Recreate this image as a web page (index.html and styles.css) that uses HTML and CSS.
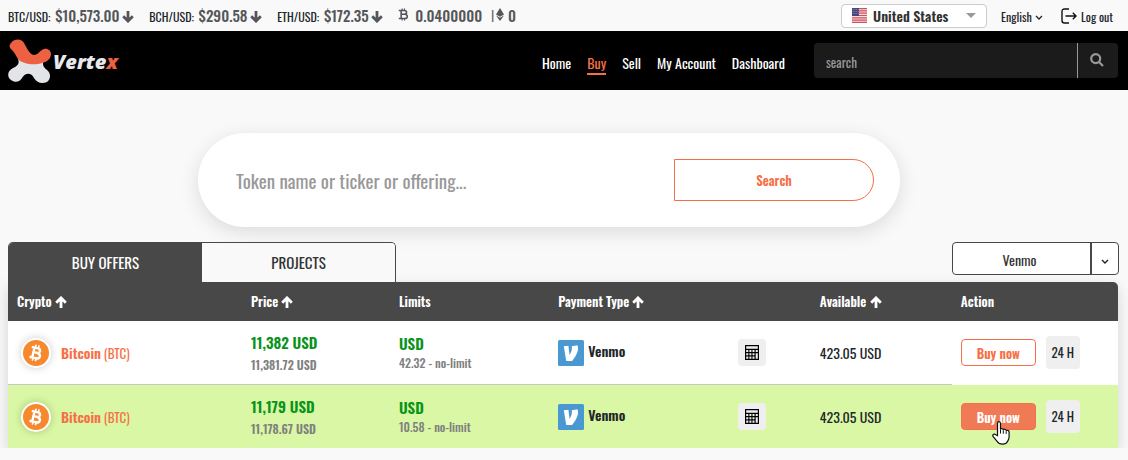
FILE: index.html
```html
<!DOCTYPE html>
<html lang="en">
<head>
  <meta charset="UTF-8" />
  <meta name="viewport" content="width=device-width, initial-scale=1.0" />
  <title>Vertex - Buy</title>
  <link rel="stylesheet" href="styles.css">
</head>
<body>

  <!-- shared icons -->
  <svg class="sprite" aria-hidden="true">
    <symbol id="arrow" viewBox="0 0 12 12">
      <path fill="none" stroke="currentColor" stroke-width="2.800" d="M6 0v10M1.200 5.300L6 10.100l4.800-4.800" />
    </symbol>
    <symbol id="btc" viewBox="0 0 14 16">
      <path fill="none" stroke="currentColor" stroke-width="2" d="M1 2.800h7.200c3.600 0 3.600 4.900 0 4.900H4.500M8.500 7.700c4.400 0 4.400 5.500 0 5.500H1M4 2.800v10.400" />
      <path stroke="currentColor" stroke-width="1.500" d="M5.300.3v2.500M8.300.3v2.500M5.300 13.200v2.500M8.300 13.200v2.500" />
    </symbol>
    <symbol id="coin" viewBox="0 0 30 30">
      <circle cx="15" cy="15" r="15" fill="#fff" />
      <circle cx="15" cy="15" r="13" fill="#f6882e" />
      <g transform="rotate(13 15 15)" fill="none" stroke="#fff">
        <path stroke-width="2.400" d="M9.500 10h6.300c3.600 0 3.600 4.700 0 4.700H12.500M16.200 14.900c4.400 0 4.400 5.200 0 5.200H9.500M12.300 10v10.100" />
        <path stroke-width="1.600" d="M13.200 6.800V10M16.300 6.800V10M13.200 20v3.200M16.300 20v3.200" />
      </g>
    </symbol>
    <symbol id="venmo" viewBox="0 0 26 26">
      <rect width="26" height="26" rx="1.500" fill="#4a98d2" />
      <path fill="#fff" d="M5.800 6.300l4.600-.6 1.200 9.200c1.600-2.800 3-6.200 2.100-8.700l5.700-1c2.300 5-1.800 11.400-5.300 15.800H8.200z" />
    </symbol>
    <symbol id="calc" viewBox="0 0 14 15">
      <path fill="#000" fill-rule="evenodd" d="M0 0h14v15H0zM1.200 1.300v2.400h11.600V1.300zM1.200 5v2h2.100V5zM4.400 5v2h2V5zM7.500 5v2h2V5zM10.700 5v2h2.100V5zM1.200 8.200v2h2.100v-2zM4.400 8.200v2h2v-2zM7.500 8.200v2h2v-2zM10.700 8.200v5.600h2.100V8.200zM1.200 11.600v2.200h2.100v-2.200zM4.400 11.600v2.200h2v-2.200zM7.500 11.600v2.200h2v-2.200z" />
    </symbol>
  </svg>

  <div class="topbar">
    <ul class="rates">
      <li>BTC/USD: <b>$10,573.00</b> <svg class="arrow"><use href="#arrow" /></svg></li>
      <li>BCH/USD: <b>$290.58</b> <svg class="arrow"><use href="#arrow" /></svg></li>
      <li>ETH/USD: <b>$172.35</b> <svg class="arrow"><use href="#arrow" /></svg></li>
      <li class="wallet">
        <svg class="btc"><use href="#btc" /></svg>
        <b>0.0400000</b>
      </li>
      <li class="wallet eth">
        <span>|</span>
        <svg class="ether" viewBox="0 0 8 13"><path d="M4 0l4 6.500-4 2.300-4-2.300zM4 9.800l4-2.300L4 13 0 7.500z" /></svg>
        <b>0</b>
      </li>
    </ul>
    <div class="settings">
      <div class="country">
        <svg class="flag" viewBox="0 0 15 15" aria-hidden="true">
          <rect width="15" height="15" fill="#f4dfe1" />
          <path stroke="#d0505c" stroke-width="1.200" d="M0 .6h15M0 2.900h15M0 5.200h15M0 7.500h15M0 9.800h15M0 12.100h15M0 14.400h15" />
          <rect width="7" height="8" fill="#46467f" />
          <path stroke="#a9a9cc" stroke-width=".8" stroke-dasharray=".8 1" d="M.8 1.500h6M.8 3.500h6M.8 5.500h6" />
        </svg>
        <select aria-label="Country">
          <option>United States</option>
        </select>
      </div>
      <select class="language" aria-label="Language">
        <option>English</option>
      </select>
      <a class="logout" href="#">
        <svg viewBox="0 0 16 16" aria-hidden="true"><path d="M8 1H3.500Q1 1 1 3.500v9Q1 15 3.500 15H8M4.500 8H15M11.800 4.800L15 8l-3.200 3.200" /></svg>
        Log out
      </a>
    </div>
  </div>

  <header class="site-header">
    <a class="logo" href="#">
      <svg viewBox="0 0 43 44" aria-hidden="true">
        <path fill="#e2e4e8" d="M10 20c2 5-1 7-5 9-6 3-6 9-2 12 4 3 9 2 11-2 3-5 9-6 12 0 3 5 8 6 13 4 4-3 4-9 0-12-4-3-5-6-3-10z" />
        <path fill="#ee6042" d="M3 4c4-5 11-4 13 0 3 5 5 11 10 12 4 0 5-4 10-6 4-1 7 2 7 5 0 6-6 9-13 10-8 1-17-1-20-5C8 17 7 14 4 11 1 9 1 6 3 4z" />
      </svg>
      <span class="brand">Verte<i>x</i></span>
    </a>
    <nav class="nav-links">
      <a href="#">Home</a>
      <a class="active" href="#">Buy</a>
      <a href="#">Sell</a>
      <a href="#">My Account</a>
      <a href="#">Dashboard</a>
    </nav>
    <form class="site-search">
      <input type="text" placeholder="search" aria-label="Search site" />
      <button type="button" aria-label="Search">
        <svg viewBox="0 0 14 14"><path d="M5.700 1.100a4.500 4.500 0 1 0 0 9 4.500 4.500 0 0 0 0-9zM9 9l4 4" /></svg>
      </button>
    </form>
  </header>

  <main>
    <form class="token-search">
      <input type="text" placeholder="Token name or ticker or offering..." aria-label="Token search" />
      <button type="button">Search</button>
    </form>

    <div class="toolbar">
      <div class="tabs">
        <button class="active" type="button">BUY OFFERS</button>
        <button type="button">PROJECTS</button>
      </div>
      <select class="payment" aria-label="Payment type">
        <option>Venmo</option>
      </select>
    </div>

    <table class="offers">
      <colgroup>
        <col class="col-crypto"><col class="col-price"><col class="col-limits"><col class="col-payment"><col class="col-calc"><col class="col-available"><col>
      </colgroup>
      <thead>
        <tr>
          <th>Crypto <svg class="arrow up"><use href="#arrow" /></svg></th>
          <th>Price <svg class="arrow up"><use href="#arrow" /></svg></th>
          <th>Limits</th>
          <th colspan="2">Payment Type <svg class="arrow up"><use href="#arrow" /></svg></th>
          <th>Available <svg class="arrow up"><use href="#arrow" /></svg></th>
          <th>Action</th>
        </tr>
      </thead>
      <tbody>
        <tr>
          <td><a class="crypto" href="#"><svg><use href="#coin" /></svg><span><b>Bitcoin</b> (BTC)</span></a></td>
          <td><div class="main-value">11,382 USD</div><div class="sub-value">11,381.72 USD</div></td>
          <td class="limits"><div class="main-value">USD</div><div class="sub-value">42.32 - no-limit</div></td>
          <td><div class="pay"><svg><use href="#venmo" /></svg><b>Venmo</b></div></td>
          <td><button class="calc" type="button" aria-label="Calculator"><svg><use href="#calc" /></svg></button></td>
          <td class="available">423.05 USD</td>
          <td>
            <div class="actions"><button class="buy" type="button">Buy now</button><span class="hours">24 H</span></div>
          </td>
        </tr>
        <tr class="selected">
          <td><a class="crypto" href="#"><svg><use href="#coin" /></svg><span><b>Bitcoin</b> (BTC)</span></a></td>
          <td><div class="main-value">11,179 USD</div><div class="sub-value">11,178.67 USD</div></td>
          <td class="limits"><div class="main-value">USD</div><div class="sub-value">10.58 - no-limit</div></td>
          <td><div class="pay"><svg><use href="#venmo" /></svg><b>Venmo</b></div></td>
          <td><button class="calc" type="button" aria-label="Calculator"><svg><use href="#calc" /></svg></button></td>
          <td class="available">423.05 USD</td>
          <td>
            <div class="actions">
              <button class="buy" type="button">Buy now</button><span class="hours">24 H</span>
              <svg class="pointer" viewBox="0 0 18 24" aria-hidden="true">
                <path fill="#fff" stroke="#111" stroke-width="1.200" d="M5.500 14.500V2.600c0-2.600 3-2.600 3 0v6c.3-1.600 2.800-1.400 2.800.5.500-1.400 2.900-1.100 2.900.8.500-1.100 2.900-.8 2.900 1.200V16c0 2-.9 3.100-1.600 4.600-.8 1.800-2.300 2.600-5 2.600-2.800 0-4.300-1-5.400-2.900L1 15.400c-.9-1.900 1.400-3 2.700-1.700z" />
                <path fill="none" stroke="#111" d="M8.500 8.500v4M11.300 9.300v3.400M14.200 10.300v2.600" />
              </svg>
            </div>
          </td>
        </tr>
      </tbody>
    </table>
  </main>

</body>
</html>
```
FILE: styles.css
```css
:root {
  --accent: #f76f47;
  --dark: #484848;
  --text: #212529;
  --page: #f9f9f9;
  --green: #08931b;
}

* { box-sizing: border-box; margin: 0; padding: 0; }

body {
  font-family: Oswald, "Roboto Condensed", "Liberation Sans Narrow", sans-serif;
  font-size: 14px;
  background: var(--page);
  color: var(--text);
}

a { text-decoration: none; }
input, select, button { font-family: inherit; }
select { appearance: none; cursor: pointer; }
.sprite { display: none; }

.arrow {
  width: 12px;
  height: 12px;
  vertical-align: -1px;
}
.arrow.up { transform: rotate(180deg); }

/* top bar */
.topbar {
  display: flex;
  justify-content: space-between;
  align-items: center;
  height: 31px;
  padding: 0 15px 0 8px;
}

.rates {
  display: flex;
  align-items: center;
  gap: 15px;
  list-style: none;
  font-size: 12px;
  line-height: 24px;
  white-space: nowrap;
}
.rates b, .rates svg { color: #55565a; }
.rates b { margin: 0 0 0 2px; font-size: 15px; font-weight: 500; }
.wallet { display: flex; align-items: center; gap: 4px; padding-bottom: 2px; color: #55565a; }
.eth { margin-left: -6px; gap: 2px; }
.btc { width: 11px; height: 13px; }
.ether { width: 8px; height: 13px; fill: currentColor; }

.settings { display: flex; align-items: center; gap: 14px; }

.country {
  display: flex;
  align-items: center;
  gap: 6px;
  width: 146px;
  height: 24px;
  padding-left: 10px;
  border: 1px solid #ccc;
  border-radius: 4px;
  background: #fff;
}
.flag { width: 15px; height: 15px; }
.country select {
  flex: 1;
  border: none;
  font-size: 14px;
  font-weight: 600;
  line-height: 20px;
  color: #333;
  background: url("data:image/svg+xml,%3Csvg xmlns='http://www.w3.org/2000/svg' width='10' height='5'%3E%3Cpath d='M0 0h10L5 5z' fill='%23999'/%3E%3C/svg%3E") no-repeat right 10px center;
}

.language {
  width: 42px;
  padding-top: 1px;
  border: none;
  font-size: 12px;
  color: var(--text);
  background: url("data:image/svg+xml,%3Csvg xmlns='http://www.w3.org/2000/svg' width='8' height='6'%3E%3Cpath d='M1 1l3 3 3-3' fill='none' stroke='%23222' stroke-width='1.300'/%3E%3C/svg%3E") no-repeat right 8px;
}

.logout {
  display: flex;
  align-items: center;
  gap: 4px;
  padding: 1px 0 0 4px;
  font-size: 12px;
  color: var(--text);
}
.logout svg { width: 16px; height: 16px; fill: none; stroke: #111; stroke-width: 1.4; }

/* header */
.site-header {
  display: flex;
  align-items: center;
  height: 59px;
  padding: 0 10px 0 8px;
  background: #000;
}

.logo { display: flex; align-items: center; gap: 2px; margin-right: auto; }
.logo svg { width: 43px; height: 44px; }
.brand {
  padding-top: 2px;
  font-family: "Open Sans", sans-serif;
  font-size: 20px;
  font-weight: 800;
  font-style: italic;
  line-height: 24px;
  color: #e8e9ec;
}
.brand i { color: #ee6042; }

.nav-links { display: flex; gap: 16px; margin-right: 29px; }
.nav-links a {
  padding-top: 6px;
  border-bottom: 2px solid transparent;
  font-size: 14px;
  line-height: 20px;
  color: #fff;
}
.nav-links a.active { color: var(--accent); border-color: var(--accent); }

.site-search {
  display: flex;
  width: 304px;
  height: 35px;
  border-radius: 4px;
  background: #1b1b1b;
}
.site-search input {
  flex: 1;
  min-width: 0;
  padding: 2px 12px 0;
  border: none;
  background: none;
  font-size: 13px;
  color: #fff;
}
.site-search input::placeholder { color: #999; }
.site-search button {
  width: 41px;
  padding-right: 3px;
  border: none;
  border-left: 1px solid #999;
  background: none;
}
.site-search svg { width: 14px; height: 14px; fill: none; stroke: #999; stroke-width: 2.2; }

/* token search */
main { padding: 0 10px 0 8px; }

.token-search {
  display: flex;
  align-items: center;
  height: 94px;
  margin: 43px 218px 0 190px;
  padding: 0 26px 0 38px;
  border-radius: 47px;
  background: #fff;
  box-shadow: 0 5px 20px rgba(0, 0, 0, 0.12);
}
.token-search input {
  flex: 1;
  min-width: 0;
  border: none;
  outline: none;
  font-size: 19px;
}
.token-search input::placeholder { color: #999; }
.token-search button {
  width: 200px;
  height: 42px;
  border: 1px solid var(--accent);
  border-radius: 0 21px 21px 0;
  background: #fff;
  font-size: 13px;
  font-weight: 600;
  color: var(--accent);
}

/* tabs */
.toolbar {
  display: flex;
  justify-content: space-between;
  align-items: flex-start;
  margin: 15px -1px 0 0;
}

.tabs {
  display: flex;
  width: 388px;
  height: 40px;
  border: 1px solid var(--dark);
  border-bottom: none;
  border-radius: 5px 5px 0 0;
  overflow: hidden;
}
.tabs button {
  flex: 1;
  padding-bottom: 1px;
  border: none;
  background: var(--page);
  font-size: 15px;
  color: #333;
}
.tabs button.active { background: var(--dark); color: #fff; }

.payment {
  width: 167px;
  height: 33px;
  padding: 2px 32px 0 0;
  border: 1px solid var(--dark);
  border-radius: 4px;
  font-size: 14px;
  text-align: center;
  text-align-last: center;
  color: #333;
  background:
    url("data:image/svg+xml,%3Csvg xmlns='http://www.w3.org/2000/svg' width='8' height='6'%3E%3Cpath d='M1 1l3 3 3-3' fill='none' stroke='%23222' stroke-width='1.400'/%3E%3C/svg%3E") no-repeat right 9px top 16px,
    linear-gradient(var(--dark), var(--dark)) no-repeat right 26px top / 2px 100%,
    #fff;
}

/* offers table */
.offers {
  width: 100%;
  table-layout: fixed;
  border-collapse: separate;
  border-spacing: 0;
  background: #fff;
  border-radius: 0 5px 0 0;
  box-shadow: 0 5px 15px rgba(0, 0, 0, 0.15);
}
.col-crypto { width: 21.08%; }
.col-price { width: 13.33%; }
.col-limits { width: 14.35%; }
.col-payment { width: 16.22%; }
.col-calc { width: 7.35%; }
.col-available { width: 12.7%; }

.offers th {
  height: 39px;
  padding: 0 9px 1px;
  background: var(--dark);
  color: #fff;
  font-size: 13px;
  font-weight: 600;
  text-align: left;
}
.offers th:last-child { border-top-right-radius: 5px; }

.offers td {
  height: 64px;
  padding: 0 9px;
  border-bottom: 1px solid #c8c8c8;
  white-space: nowrap;
}
.offers td:last-child { border-bottom-color: transparent; }
.offers .selected td { height: 63px; border-bottom: none; background: #d9f7a4; }

.crypto {
  display: flex;
  align-items: center;
  gap: 10px;
  padding-left: 4px;
  font-size: 13px;
  color: var(--accent);
}
.crypto b { font-size: 14px; font-weight: 600; }
.crypto svg {
  width: 30px;
  height: 30px;
  border-radius: 50%;
  box-shadow: 0 0 8px rgba(0, 0, 0, 0.2);
}

.main-value { font-size: 15px; font-weight: 600; line-height: 24px; color: var(--green); }
.sub-value { font-size: 12px; font-weight: 600; line-height: 22px; color: #808080; }
.limits .main-value, .limits .sub-value { line-height: 20px; }
.limits .sub-value { font-weight: 500; }

.pay { display: flex; gap: 4px; font-size: 14px; line-height: 22px; }
.pay b { font-weight: 600; }
.pay svg { width: 26px; height: 26px; }

.calc {
  display: flex;
  justify-content: center;
  align-items: center;
  width: 28px;
  height: 27px;
  border: none;
  border-radius: 4px;
  background: #efefef;
}
.calc svg { width: 14px; height: 15px; }

.available { font-size: 14px; }

.actions { display: flex; align-items: center; gap: 10px; position: relative; }
.buy {
  width: 75px;
  height: 27px;
  border: 1px solid var(--accent);
  border-radius: 4px;
  background: #fff;
  font-size: 13px;
  font-weight: 600;
  color: var(--accent);
}
.selected .buy { background: #f07a55; color: #fff; }
.hours {
  width: 34px;
  border-radius: 4px;
  background: #efefef;
  font-size: 13px;
  line-height: 33px;
  text-align: center;
}
.pointer { position: absolute; left: 31px; top: 21px; width: 18px; height: 24px; }
```
